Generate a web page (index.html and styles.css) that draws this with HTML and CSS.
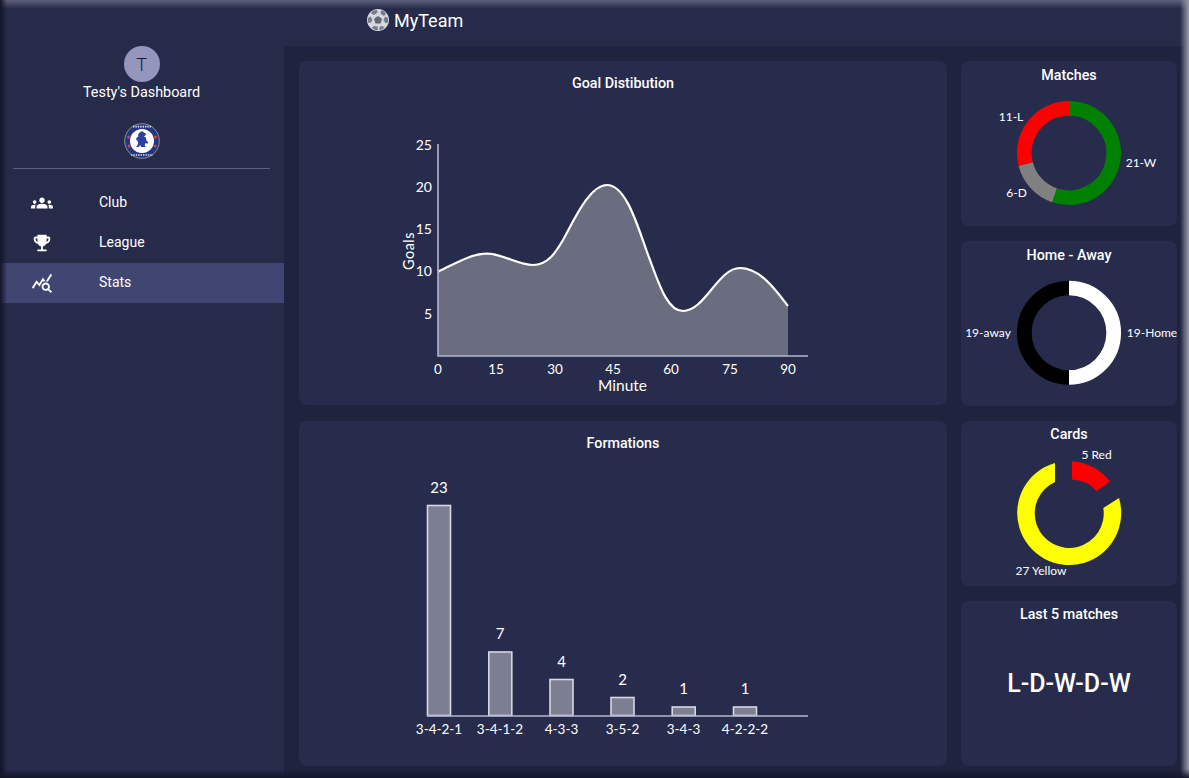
FILE: index.html
```html
<!DOCTYPE html>
<html>
<head>
	<title>MyTeam</title>
	<link rel="stylesheet" href="styles.css">
</head>
<body>
	<div class="page">
		<header class="topbar">
			<svg class="ball" viewBox="0 0 22 22">
				<circle cx="11" cy="11" r="11" fill="#d5d9dd"/>
				<path d="M11 7l4 2.8-1.5 4.7h-5L7 9.8z" fill="#626776"/>
				<path d="M6 1.4L10 1l.6 2.6L7 6 3.9 4.2zM16 1.4l3 3-2 2.6-3.4-2.2L14 1.6zM1 9l2.6-1.4L5.4 11l-1.8 3L.8 13.4zM21 9l.2 4.4-2.6.8-2.2-3.2 1.8-3.4zM7 17l3.6.4.4 3.8-4-.6-2.2-2.2zM15 17l2.4 1.2-2 2.4-3 .6.2-3.4z" fill="#767b8a"/>
			</svg>
			<span class="brand">MyTeam</span>
		</header>

		<aside class="sidebar">
			<div class="profile">
				<div class="avatar">T</div>
				<div class="profile-name">Testy's Dashboard</div>
				<svg class="crest" viewBox="0 0 36 36">
					<circle cx="18" cy="18" r="18" fill="#23367f"/>
					<circle cx="18" cy="18" r="17.3" fill="none" stroke="#b9a06a" stroke-width=".8"/>
					<circle cx="18" cy="18" r="12" fill="#fff"/>
					<circle cx="4.6" cy="14" r="1.5" fill="#d6404e"/>
					<circle cx="31.4" cy="14" r="1.5" fill="#d6404e"/>
					<circle cx="5" cy="23" r="1.5" fill="#d6404e"/>
					<circle cx="31" cy="23" r="1.5" fill="#d6404e"/>
					<path d="M16 9l3-.8 1 1.6 2 .6-.6 2.2-1.6.6 2.2 1.6.6 3.2 1.6.8-.6 2-2-.8-1 2.4 1.4 1.6h-5l-.6-2-1.8 2h-2.4l2-3.2-.6-3-1.6-1 .8-2.4 1.6-.8-.4-2.2z" fill="#2b3fa0"/>
					<path d="M9 3.6h18M7 32h22" stroke="#dfe2ee" stroke-width="1.6" stroke-dasharray="1.4 1"/>
				</svg>
			</div>
			<nav class="nav">
				<a class="nav-item">
					<svg class="nav-icon" viewBox="0 0 24 24"><path d="M12 12.75c1.63 0 3.07.39 4.24.9 1.08.48 1.76 1.56 1.76 2.73V18H6v-1.61c0-1.18.68-2.26 1.76-2.73 1.17-.52 2.61-.91 4.24-.91zM4 13c1.1 0 2-.9 2-2s-.9-2-2-2-2 .9-2 2 .9 2 2 2zm1.13 1.1c-.37-.06-.74-.1-1.13-.1-.99 0-1.93.21-2.78.58C.48 14.9 0 15.62 0 16.43V18h4.5v-1.61c0-.83.23-1.61.63-2.29zM20 13c1.1 0 2-.9 2-2s-.9-2-2-2-2 .9-2 2 .9 2 2 2zm4 3.43c0-.81-.48-1.53-1.22-1.85-.85-.37-1.79-.58-2.78-.58-.39 0-.76.04-1.13.1.4.68.63 1.46.63 2.29V18H24v-1.57zM15 9c0 1.66-1.34 3-3 3s-3-1.34-3-3 1.34-3 3-3 3 1.34 3 3z"/></svg>
					<span class="nav-label">Club</span>
				</a>
				<a class="nav-item">
					<svg class="nav-icon" viewBox="0 0 24 24"><path d="M19 5h-2V3H7v2H5c-1.1 0-2 .9-2 2v1c0 2.55 1.92 4.63 4.39 4.94.63 1.5 1.98 2.63 3.61 2.96V19H7v2h10v-2h-4v-3.1c1.63-.33 2.98-1.46 3.61-2.96C19.08 12.63 21 10.55 21 8V7c0-1.1-.9-2-2-2zM5 8V7h2v3.82C5.84 10.4 5 9.3 5 8zm14 0c0 1.3-.84 2.4-2 2.82V7h2v1z"/></svg>
					<span class="nav-label">League</span>
				</a>
				<a class="nav-item active">
					<svg class="nav-icon" viewBox="0 0 24 24"><path d="M19.88 18.47c.44-.7.7-1.51.7-2.39 0-2.49-2.01-4.5-4.5-4.5s-4.5 2.01-4.5 4.5 2.01 4.5 4.5 4.5c.88 0 1.69-.26 2.39-.7L21.58 23 23 21.58l-3.12-3.11zm-3.8.11c-1.38 0-2.5-1.12-2.5-2.5s1.12-2.5 2.5-2.5 2.5 1.12 2.5 2.5-1.12 2.5-2.5 2.5zm-.36-8.5c-.74.02-1.45.18-2.1.45l-.55-.83-3.8 6.18-3.01-3.52-3.63 5.81L1 17l5-8 3 3.5L13 6l2.72 4.08zm2.59.5c-.64-.28-1.33-.45-2.05-.49L21.38 2 23 3.18l-4.69 7.4z"/></svg>
					<span class="nav-label">Stats</span>
				</a>
			</nav>
		</aside>

		<main class="content">
			<div class="col-wide">
				<section class="card card-big">
					<h3 class="card-title">Goal Distibution</h3>
					<svg class="chart" viewBox="299 93 648 312">
						<path class="area" d="M438 271.7C455 264 470 253.7 487 253.7C503 253.7 518 265 533 265C548 265 556 252 563 240C575 218 590 185 607 185C628 185 640 235 650 260C660 287 668 311 683 311C705 311 718 268 740 268C760 268 775 289 788 306L788 356L438 356Z"/>
						<path class="line" d="M438 271.7C455 264 470 253.7 487 253.7C503 253.7 518 265 533 265C548 265 556 252 563 240C575 218 590 185 607 185C628 185 640 235 650 260C660 287 668 311 683 311C705 311 718 268 740 268C760 268 775 289 788 306"/>
						<path class="axis" d="M438 144V356H808"/>
						<g class="tick-y">
							<text x="432" y="150">25</text>
							<text x="432" y="192">20</text>
							<text x="432" y="234">15</text>
							<text x="432" y="276">10</text>
							<text x="432" y="319">5</text>
						</g>
						<g class="tick-x">
							<text x="438" y="374">0</text>
							<text x="496" y="374">15</text>
							<text x="555" y="374">30</text>
							<text x="613" y="374">45</text>
							<text x="671" y="374">60</text>
							<text x="730" y="374">75</text>
							<text x="788" y="374">90</text>
						</g>
						<text class="axis-label" x="622.5" y="391">Minute</text>
						<text class="axis-label goals-label" transform="translate(414 251) rotate(-90)">Goals</text>
					</svg>
				</section>
				<section class="card card-big">
					<h3 class="card-title">Formations</h3>
					<svg class="chart" viewBox="299 453 648 313">
						<rect class="bar" x="427.5" y="505.5" width="23" height="210"/>
						<rect class="bar" x="488.8" y="652" width="23" height="63.5"/>
						<rect class="bar" x="550" y="679.5" width="23" height="36"/>
						<rect class="bar" x="611" y="697.5" width="23" height="18"/>
						<rect class="bar" x="672.2" y="707" width="23" height="8.5"/>
						<rect class="bar" x="733.5" y="707" width="23" height="8.5"/>
						<path class="axis" d="M427 716H808"/>
						<g class="bar-value">
							<text x="439" y="492.5">23</text>
							<text x="500" y="638.5">7</text>
							<text x="561.5" y="667">4</text>
							<text x="622.5" y="685">2</text>
							<text x="683.5" y="694">1</text>
							<text x="745" y="694">1</text>
						</g>
						<g class="bar-label">
							<text x="439" y="734">3-4-2-1</text>
							<text x="500" y="734">3-4-1-2</text>
							<text x="561.5" y="734">4-3-3</text>
							<text x="622.5" y="734">3-5-2</text>
							<text x="683.5" y="734">3-4-3</text>
							<text x="745" y="734">4-2-2-2</text>
						</g>
					</svg>
				</section>
			</div>

			<div class="col-side">
				<section class="card">
					<h3 class="card-title">Matches</h3>
					<svg class="chart" viewBox="961 85 216 140.75">
						<path class="ring ring-green" d="M1069 108.3A44.7 44.7 0 1 1 1054.5 195.3"/>
						<path class="ring ring-grey" d="M1054.5 195.3A44.7 44.7 0 0 1 1025.7 164"/>
						<path class="ring ring-red" d="M1025.7 164A44.7 44.7 0 0 1 1069 108.3"/>
						<text class="pie-label" x="1011" y="121">11-L</text>
						<text class="pie-label" x="1141" y="167">21-W</text>
						<text class="pie-label" x="1016.5" y="197">6-D</text>
					</svg>
				</section>
				<section class="card">
					<h3 class="card-title">Home - Away</h3>
					<svg class="chart" viewBox="961 265 216 140.75">
						<path class="ring ring-white" d="M1069 288A44.7 44.7 0 0 1 1069 377.4"/>
						<path class="ring ring-black" d="M1069 377.4A44.7 44.7 0 0 1 1069 288"/>
						<text class="pie-label" x="988" y="337">19-away</text>
						<text class="pie-label" x="1152" y="337">19-Home</text>
					</svg>
				</section>
				<section class="card card-tight">
					<h3 class="card-title">Cards</h3>
					<svg class="chart" viewBox="961 444 216 141.75">
						<path class="wedge-yellow" d="M1055 463A52 52 0 1 0 1119 498L1103.3 508A34.5 34.5 0 1 1 1055 482Z"/>
						<path class="wedge-red" d="M1072 461.5A52 52 0 0 1 1110 481.5L1096.7 491A34.5 34.5 0 0 0 1072 479.5Z"/>
						<text class="pie-label" x="1096.5" y="459">5 Red</text>
						<text class="pie-label" x="1041" y="575">27 Yellow</text>
					</svg>
				</section>
				<section class="card card-tight">
					<h3 class="card-title">Last 5 matches</h3>
					<div class="form-guide">L-D-W-D-W</div>
				</section>
			</div>
		</main>
	</div>
	<div class="frame"></div>
</body>
</html>
```

FILE: styles.css
```css
html,
body {
	margin: 0;
	height: 100%;
	overflow: hidden;
}

body {
	background-color: #272b4a;
	color: #fff;
	font-family: Roboto, sans-serif;
}

.page {
	display: grid;
	grid-template-columns: 284px 1fr;
	grid-template-rows: 46px 1fr;
	height: 778px;
}

.topbar {
	grid-column: 1 / 3;
	display: flex;
	align-items: center;
	gap: 5px;
	padding: 0 0 6px 367px;
}

.ball {
	width: 22px;
	height: 22px;
	margin-top: -1px;
}

.brand {
	font-size: 18px;
}

.sidebar {
	background-color: #272b4a;
}

.profile {
	display: flex;
	flex-direction: column;
	align-items: center;
	margin: 0 14px 0 13px;
	height: 122px;
	border-bottom: 1px solid #5d607c;
}

.avatar {
	display: flex;
	align-items: center;
	justify-content: center;
	width: 36px;
	height: 36px;
	border-radius: 50%;
	background-color: #9496bd;
	color: #15172a;
	font-size: 18px;
	font-weight: 300;
}

.profile-name {
	margin-top: 1px;
	font-size: 14.4px;
	line-height: 20px;
}

.crest {
	width: 36px;
	height: 36px;
	margin-top: 20px;
}

.nav {
	padding-top: 14px;
}

.nav-item {
	display: flex;
	align-items: center;
	height: 40px;
	padding-left: 31px;
	font-size: 14px;
}

.nav-item.active {
	background-color: #404571;
}

.nav-icon {
	width: 22px;
	height: 22px;
	margin-right: 46px;
	fill: #fff;
}

.nav-label {
	margin-top: -2px;
}

.content {
	display: grid;
	grid-template-columns: 648px 216px;
	column-gap: 14px;
	padding: 15px 12px 12px 15px;
	background-color: #1f2340;
	min-height: 0;
}

.col-wide,
.col-side {
	display: grid;
	min-height: 0;
}

.col-wide {
	grid-template-rows: 344px 345px;
	row-gap: 16px;
}

.col-side {
	grid-template-rows: repeat(4, 1fr);
	row-gap: 15.3px;
}

.card {
	display: flex;
	flex-direction: column;
	min-height: 0;
	padding-top: 5px;
	border-radius: 8px;
	background-color: #282c4c;
}

.card-big {
	padding-top: 13px;
}

.card-tight {
	padding-top: 4px;
}

.card-title {
	margin: 0;
	font-size: 14.3px;
	font-weight: 500;
	line-height: 19px;
	text-align: center;
}

.chart {
	display: block;
	flex: 1;
	width: 100%;
	min-height: 0;
}

.chart text {
	fill: #fff;
	font-family: Lato, sans-serif;
}

.area {
	fill: #6a6c80;
}

.line {
	fill: none;
	stroke: #fff;
	stroke-width: 2.2;
}

.axis {
	fill: none;
	stroke: #b4b5cb;
	stroke-width: 1.6;
}

.tick-y text {
	font-size: 14px;
	text-anchor: end;
}

.tick-x text,
.bar-value text,
.bar-label text,
.axis-label,
.pie-label {
	text-anchor: middle;
}

.tick-x text {
	font-size: 13.5px;
}

.axis-label {
	font-size: 15.5px;
}

.goals-label {
	font-size: 14.5px;
	letter-spacing: .5px;
}

.bar {
	fill: #7c7e92;
	stroke: #d6d7e2;
	stroke-width: 1.6;
}

.bar-value text {
	font-size: 15px;
}

.bar-label text {
	font-size: 13.5px;
}

.pie-label {
	font-size: 12px;
}

.ring {
	fill: none;
	stroke-width: 14.7;
}

.ring-green {
	stroke: #008000;
}

.ring-grey {
	stroke: #808080;
}

.ring-red {
	stroke: #f00;
}

.ring-white {
	stroke: #fff;
}

.ring-black {
	stroke: #000;
}

.wedge-yellow {
	fill: #ff0;
}

.wedge-red {
	fill: #f00;
}

.form-guide {
	display: flex;
	flex: 1;
	align-items: center;
	justify-content: center;
	padding-bottom: 24px;
	font-size: 25px;
	font-weight: 500;
}

.frame {
	position: fixed;
	top: 0;
	right: 0;
	bottom: 0;
	left: 0;
	pointer-events: none;
	background-image:
		linear-gradient(to top, #14162c, rgba(20, 22, 44, 0)),
		linear-gradient(to left, #9a9cab, rgba(154, 156, 171, 0)),
		linear-gradient(to right, #12142a, rgba(18, 20, 42, 0)),
		linear-gradient(to bottom, #5d6079, rgba(93, 96, 121, 0));
	background-repeat: no-repeat;
	background-position: bottom left, top right, top left, top left;
	background-size: 100% 9px, 9px 100%, 7px 100%, 100% 9px;
}
```
